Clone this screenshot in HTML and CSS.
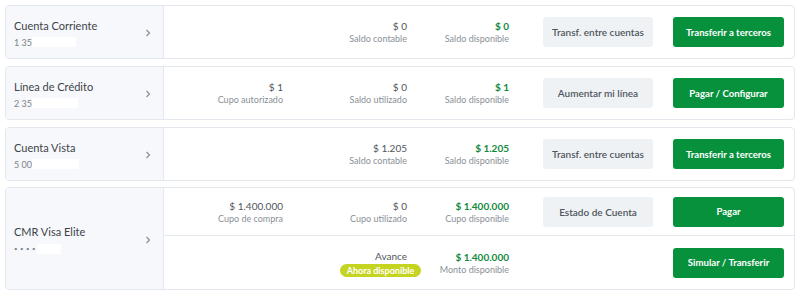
FILE: index.html
```html
<!DOCTYPE html>
<html lang="es">
<head>
<meta charset="utf-8">
<title>Productos</title>
<link rel="stylesheet" href="styles.css">
</head>
<body>
<div class="list">

  <div class="card">
    <div class="side">
      <div class="side-text">
        <div class="name">Cuenta Corriente</div>
        <div class="num">1 35<span class="mask w44"></span></div>
      </div>
      <svg class="chev" width="6" height="8" viewBox="0 0 6 8"><path d="M1.5 1 L4.5 4 L1.5 7" fill="none" stroke="#8a8f96" stroke-width="1.2"/></svg>
    </div>
    <div class="main">
      <div class="row">
        <div class="stat"></div>
        <div class="stat"><div class="val">$ 0</div><div class="lbl">Saldo contable</div></div>
        <div class="stat"><div class="val green">$ 0</div><div class="lbl">Saldo disponible</div></div>
        <div class="spacer"></div>
        <button class="btn gray">Transf. entre cuentas</button>
        <button class="btn primary">Transferir a terceros</button>
      </div>
    </div>
  </div>

  <div class="card">
    <div class="side">
      <div class="side-text">
        <div class="name">Línea de Crédito</div>
        <div class="num">2 35<span class="mask w46"></span></div>
      </div>
      <svg class="chev" width="6" height="8" viewBox="0 0 6 8"><path d="M1.5 1 L4.5 4 L1.5 7" fill="none" stroke="#8a8f96" stroke-width="1.2"/></svg>
    </div>
    <div class="main">
      <div class="row">
        <div class="stat"><div class="val">$ 1</div><div class="lbl">Cupo autorizado</div></div>
        <div class="stat"><div class="val">$ 0</div><div class="lbl">Saldo utilizado</div></div>
        <div class="stat"><div class="val green">$ 1</div><div class="lbl">Saldo disponible</div></div>
        <div class="spacer"></div>
        <button class="btn gray">Aumentar mi línea</button>
        <button class="btn primary">Pagar / Configurar</button>
      </div>
    </div>
  </div>

  <div class="card">
    <div class="side">
      <div class="side-text">
        <div class="name">Cuenta Vista</div>
        <div class="num">5 00<span class="mask w47"></span></div>
      </div>
      <svg class="chev" width="6" height="8" viewBox="0 0 6 8"><path d="M1.5 1 L4.5 4 L1.5 7" fill="none" stroke="#8a8f96" stroke-width="1.2"/></svg>
    </div>
    <div class="main">
      <div class="row">
        <div class="stat"></div>
        <div class="stat"><div class="val">$ 1.205</div><div class="lbl">Saldo contable</div></div>
        <div class="stat"><div class="val green">$ 1.205</div><div class="lbl">Saldo disponible</div></div>
        <div class="spacer"></div>
        <button class="btn gray">Transf. entre cuentas</button>
        <button class="btn primary">Transferir a terceros</button>
      </div>
    </div>
  </div>

  <div class="card tall">
    <div class="side">
      <div class="side-text">
        <div class="name">CMR Visa Elite</div>
        <div class="num dots">• • • •<span class="mask w24"></span></div>
      </div>
      <svg class="chev" width="6" height="8" viewBox="0 0 6 8"><path d="M1.5 1 L4.5 4 L1.5 7" fill="none" stroke="#8a8f96" stroke-width="1.2"/></svg>
    </div>
    <div class="main">
      <div class="row r1">
        <div class="stat"><div class="val">$ 1.400.000</div><div class="lbl">Cupo de compra</div></div>
        <div class="stat"><div class="val">$ 0</div><div class="lbl">Cupo utilizado</div></div>
        <div class="stat"><div class="val green">$ 1.400.000</div><div class="lbl">Cupo disponible</div></div>
        <div class="spacer"></div>
        <button class="btn gray">Estado de Cuenta</button>
        <button class="btn primary">Pagar</button>
      </div>
      <div class="row r2">
        <div class="stat"></div>
        <div class="stat"><div class="val">Avance</div><div class="badge">Ahora disponible</div></div>
        <div class="stat"><div class="val green">$ 1.400.000</div><div class="lbl">Monto disponible</div></div>
        <div class="spacer"></div>
        <div class="empty"></div>
        <button class="btn primary">Simular / Transferir</button>
      </div>
    </div>
  </div>

</div>
</body>
</html>
```

FILE: styles.css
```css
* { box-sizing: border-box; }

html, body {
  margin: 0;
  padding: 0;
  background: #ffffff;
  font-family: Lato, "Noto Sans", sans-serif;
  color: #444a52;
}

.list {
  padding: 5px 5px 0 5px;
  display: flex;
  flex-direction: column;
  gap: 7px;
}

.card {
  display: flex;
  width: 790px;
  height: 54px;
  border: 1px solid #e3e8ef;
  border-radius: 4px;
  background: #fff;
  overflow: hidden;
}

.card.tall {
  height: 103px;
  margin-top: -1px;
}

.side {
  width: 158px;
  flex: none;
  background: #f6f8fb;
  border-right: 1px solid #e3e8ef;
  display: flex;
  align-items: center;
  padding: 0 12px 0 8px;
}

.side-text {
  flex: 1;
  display: flex;
  flex-direction: column;
  padding-top: 2px;
}

.name {
  font-size: 11px;
  line-height: 14px;
  color: #3d434a;
  font-weight: 400;
}

.num {
  margin-top: 4px;
  font-size: 9px;
  line-height: 11px;
  color: #7d838a;
  display: flex;
  align-items: center;
}

.num.dots {
  font-size: 6px;
  letter-spacing: 0.5px;
}

.mask {
  display: inline-block;
  height: 10px;
  background: #ffffff;
}
.w44 { width: 44px; }
.w46 { width: 46px; }
.w47 { width: 47px; }
.w24 { width: 24px; margin-left: 1px; }

.chev {
  flex: none;
  margin-top: 2px;
}

.main {
  flex: 1;
  display: flex;
  flex-direction: column;
}

.row {
  flex: 1;
  display: grid;
  grid-template-columns: 119px 124px 102px 34px 110px 20px 111px;
  align-items: center;
  padding-right: 10px;
}

.row .btn.primary { grid-column: 7; }
.row .btn.gray { grid-column: 5; }
.row .empty { grid-column: 5; }

.r1 {
  flex: none;
  height: 48px;
  border-bottom: 1px solid #e3e8ef;
}

.r2 {
  flex: 1;
}

.stat {
  display: flex;
  flex-direction: column;
  align-items: flex-end;
  padding-top: 1px;
}

.val {
  font-size: 10px;
  line-height: 13px;
  color: #50565d;
}

.val.green {
  color: #128a3e;
  font-weight: 700;
}

.lbl {
  font-size: 9px;
  line-height: 12px;
  color: #8a9097;
}

.badge {
  margin-top: 1px;
  margin-right: -14px;
  width: 81px;
  height: 13px;
  border-radius: 7px;
  background: #c5d420;
  color: #ffffff;
  font-size: 9px;
  font-weight: 700;
  line-height: 13px;
  text-align: center;
}

.btn {
  height: 30px;
  border: none;
  border-radius: 3px;
  font-family: Lato, "Noto Sans", sans-serif;
  font-size: 10px;
  padding: 0;
  cursor: pointer;
}

.btn.gray {
  background: #eff2f5;
  color: #50565d;
  font-weight: 600;
}

.btn.primary {
  background: #07913d;
  color: #ffffff;
  font-weight: 700;
  font-size: 9.6px;
}
```
